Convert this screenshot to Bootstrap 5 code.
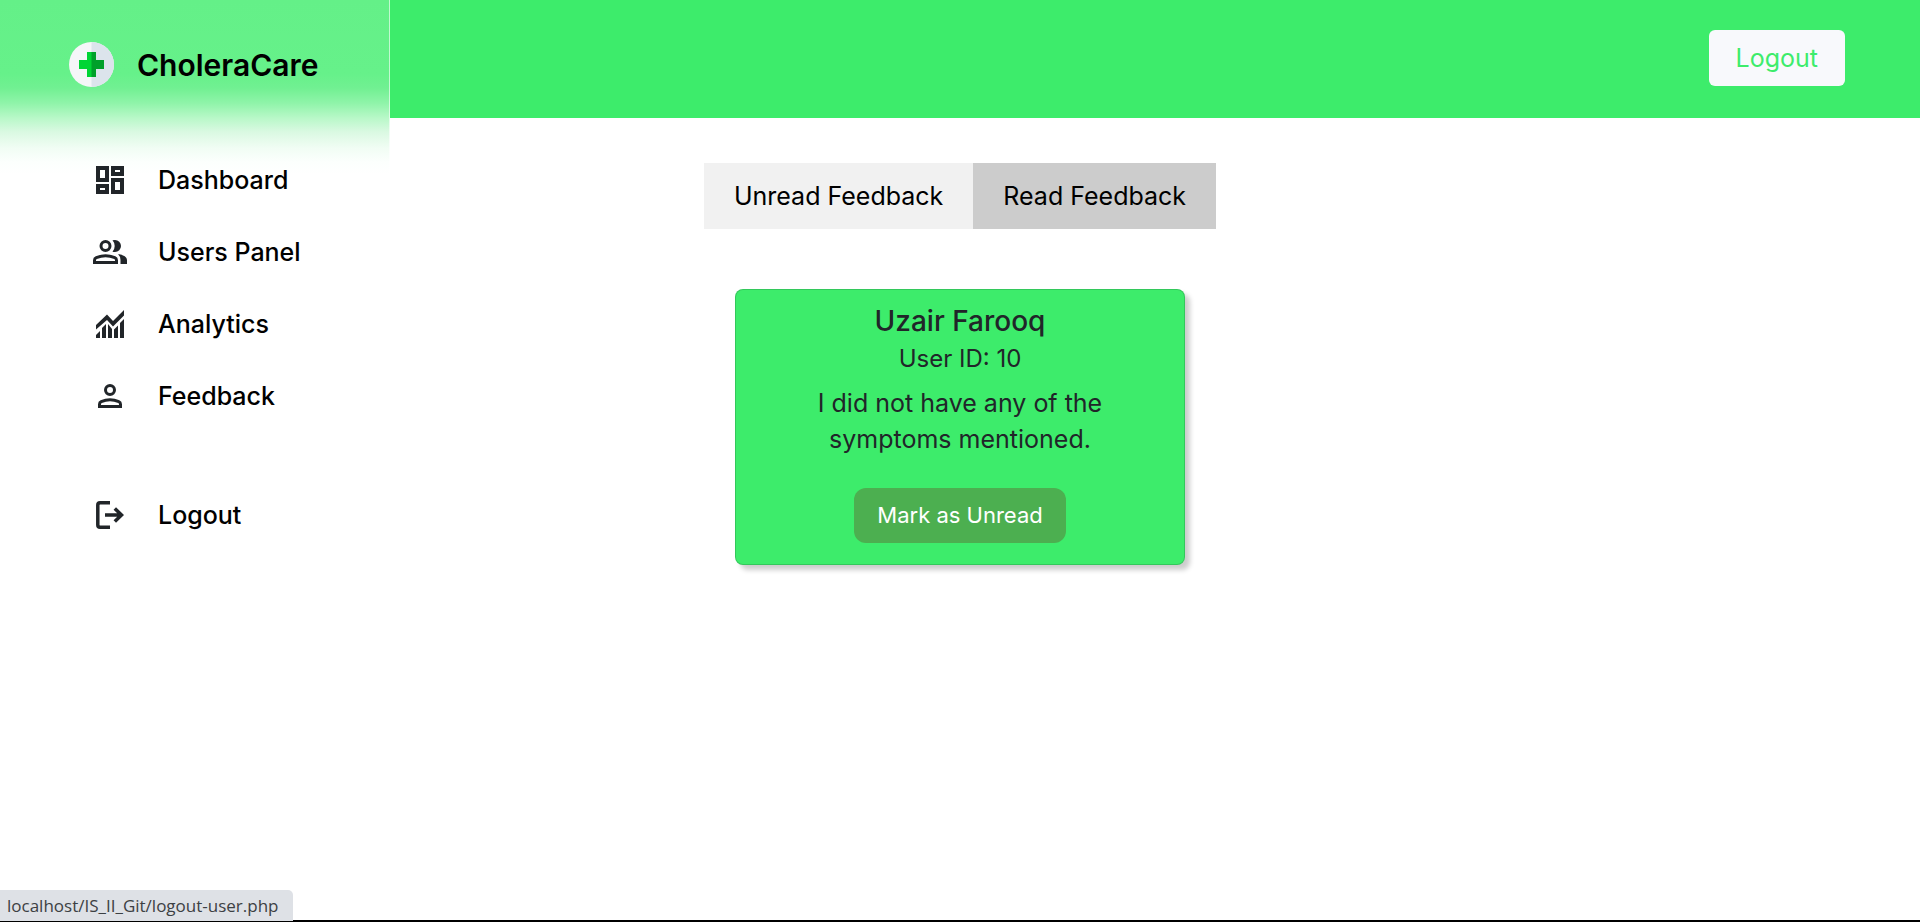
<!DOCTYPE html>
<html lang="en">
<head>
<meta charset="utf-8">
<meta name="viewport" content="width=device-width, initial-scale=1">
<title>CholeraCare</title>
<link href="https://cdn.jsdelivr.net/npm/bootstrap@5.3.0/dist/css/bootstrap.min.css" rel="stylesheet">
<style>
  :root { --brand: #3dec6b; }
  body { font-family: Inter, "Open Sans", sans-serif; font-size: 25px; line-height: 36px; }
  a { color: #000; text-decoration: none; }
  .top-header { background: var(--brand); height: 118px; padding: 30px 75px; }
  .btn-logout { background: #f8f9fc; color: var(--brand); font-size: 25px; line-height: 36px; padding: 10px 27px; border: 0; border-radius: 6px; }
  .btn-logout:hover { background: #fff; color: var(--brand); }
  .side-panel { width: 390px; background: #fff linear-gradient(#64f088 0, #66f18a 74px, #71f092 88px, #8ff4a9 103px, #b8f8c8 118px, #daf9e2 132px, #f1fdf4 148px, #fcfffd 162px, #fff 174px); border-right: 1px solid rgba(255,255,255,.6); padding-top: 42px; }
  .brand-link { gap: 23px; padding-left: 69px; font-size: 30px; font-weight: 600; line-height: 44px; }
  .side-menu { margin-top: 57px; padding-left: 92px; }
  .side-menu a { gap: 30px; padding: 18px 0; font-weight: 500; }
  .side-menu .menu-end { margin-top: 47px; }
  .side-menu svg { color: #212529; }
  .tabs-row { padding: 45px 0 60px; }
  .tab-btn { border: 0; background: #f1f1f1; color: #000; padding: 15px 30px; }
  .tab-btn.active { background: #ccc; }
  .feedback-card { width: 450px; max-width: 100%; background: var(--brand); border-radius: 8px; border-color: rgba(0,0,0,.15); box-shadow: 5px 5px 5px rgba(0,0,0,.2); }
  .feedback-card .card-body { padding: 15px 64px 20px; }
  .card-name { font-size: 28px; line-height: 32px; font-weight: 500; }
  .user-id { font-size: 24px; }
  .card-message { padding-bottom: 7px; }
  .btn-mark { background: #4caf50; color: #fff; border: 0; border-radius: 12px; font-size: 22px; line-height: 31px; padding: 12px 23px; margin-bottom: 1px; }
  .page-end { height: 2px; background: #000; }
  .link-status { background: #dee1e6; color: #3c4043; font-family: "Open Sans", sans-serif; font-size: 17px; line-height: 31px; padding: 0 14px 0 7px; margin-bottom: 1px; border-top-right-radius: 5px; }
</style>
</head>
<body class="d-flex flex-column min-vh-100">
<header class="top-header d-flex justify-content-end align-items-start">
  <button type="button" class="btn btn-logout">Logout</button>
</header>

<aside class="side-panel position-absolute top-0 start-0">
  <a href="#" class="brand-link d-flex align-items-center">
    <svg width="45" height="45" viewBox="0 0 45 45" aria-hidden="true">
      <circle cx="22.500" cy="22.500" r="22.500" fill="#f5f6f8"/>
      <path d="M22.500 0a22.500 22.500 0 0 1 0 45z" fill="#dce4ec"/>
      <path d="M18 10h9v8h8v9h-8v8h-9v-8h-8v-9h8z" fill="#00d535"/>
      <path d="M22.500 10H27v8h8v9h-8v8h-4.500z" fill="#00a02a"/>
    </svg>
    <span>CholeraCare</span>
  </a>
  <nav class="side-menu" aria-label="Main menu">
    <a href="#" class="d-flex align-items-center">
      <svg width="36" height="36" viewBox="0 0 36 36" fill="currentColor" fill-rule="evenodd" aria-hidden="true"><path d="M4 4h13v16H4zM8 8v8h5V8zM4 22h13v10H4zM8 26v2h5v-2zM19 4h13v10H19zM23 8v2h5V8zM19 16h13v16H19zM23 20v8h5v-8z"/></svg>
      <span>Dashboard</span>
    </a>
    <a href="#" class="d-flex align-items-center">
      <svg width="36" height="36" viewBox="0 0 36 36" fill="currentColor" aria-hidden="true"><g fill="none" stroke="currentColor" stroke-width="3"><circle cx="13.500" cy="12" r="4.500"/><path d="M2.500 28.500h22v-2.300q0-1.800-1.700-2.500-9.200-3.900-18.500 0-1.800.8-1.800 2.500z"/></g><path d="M20.500 17.800q2.200-2.500 2.200-5.800t-2.200-5.800q.8-.2 2.500-.2a6 6 0 0 1 0 12q-1.700 0-2.500-.2zM28.500 30H35v-4q0-4.500-9-6 2.500 2.500 2.500 6z"/></svg>
      <span>Users Panel</span>
    </a>
    <a href="#" class="d-flex align-items-center">
      <svg width="36" height="36" viewBox="0 0 36 36" fill="currentColor" aria-hidden="true"><path d="M4 19 15 8.500l6 6.500L32 4v5.500L21 20.500l-6-6.500L4 23.500zM4 29l4-4v7H4zM10 22l4-4v14h-4zM16 18l4 5v9h-4zM22 23.500l4-4V32h-4zM28 17l4-4v19h-4z"/></svg>
      <span>Analytics</span>
    </a>
    <a href="#" class="d-flex align-items-center">
      <svg width="36" height="36" viewBox="0 0 36 36" fill="none" stroke="currentColor" stroke-width="3" aria-hidden="true"><circle cx="18" cy="12" r="4.500"/><path d="M7.500 28.500h21v-2.300q0-1.800-1.700-2.500-8.800-3.900-17.600 0-1.700.8-1.700 2.500z"/></svg>
      <span>Feedback</span>
    </a>
    <a href="#" class="menu-end d-flex align-items-center">
      <svg width="36" height="36" viewBox="0 0 36 36" fill="none" stroke="currentColor" stroke-width="3.500" aria-hidden="true"><path d="M18 5.800H8q-2.200 0-2.200 2.200v20q0 2.200 2.200 2.200h10M13 18h17M22.800 11.500l6.700 6.500-6.700 6.500"/></svg>
      <span>Logout</span>
    </a>
  </nav>
</aside>

<main>
  <div class="tabs-row d-flex justify-content-center">
    <button type="button" class="tab-btn">Unread Feedback</button>
    <button type="button" class="tab-btn active">Read Feedback</button>
  </div>
  <article class="card feedback-card mx-auto text-center">
    <div class="card-body">
      <h5 class="card-name mb-1">Uzair Farooq</h5>
      <p class="user-id mb-2">User ID: 10</p>
      <p class="card-message mb-0">I did not have any of the symptoms mentioned.</p>
      <button type="button" class="btn btn-mark mt-4">Mark as Unread</button>
    </div>
  </article>
</main>

<div class="page-end mt-auto"></div>
<div class="link-status position-fixed bottom-0 start-0">localhost/IS_II_Git/logout-user.php</div>
<script src="https://cdn.jsdelivr.net/npm/bootstrap@5.3.0/dist/js/bootstrap.bundle.min.js"></script>
</body>
</html>
